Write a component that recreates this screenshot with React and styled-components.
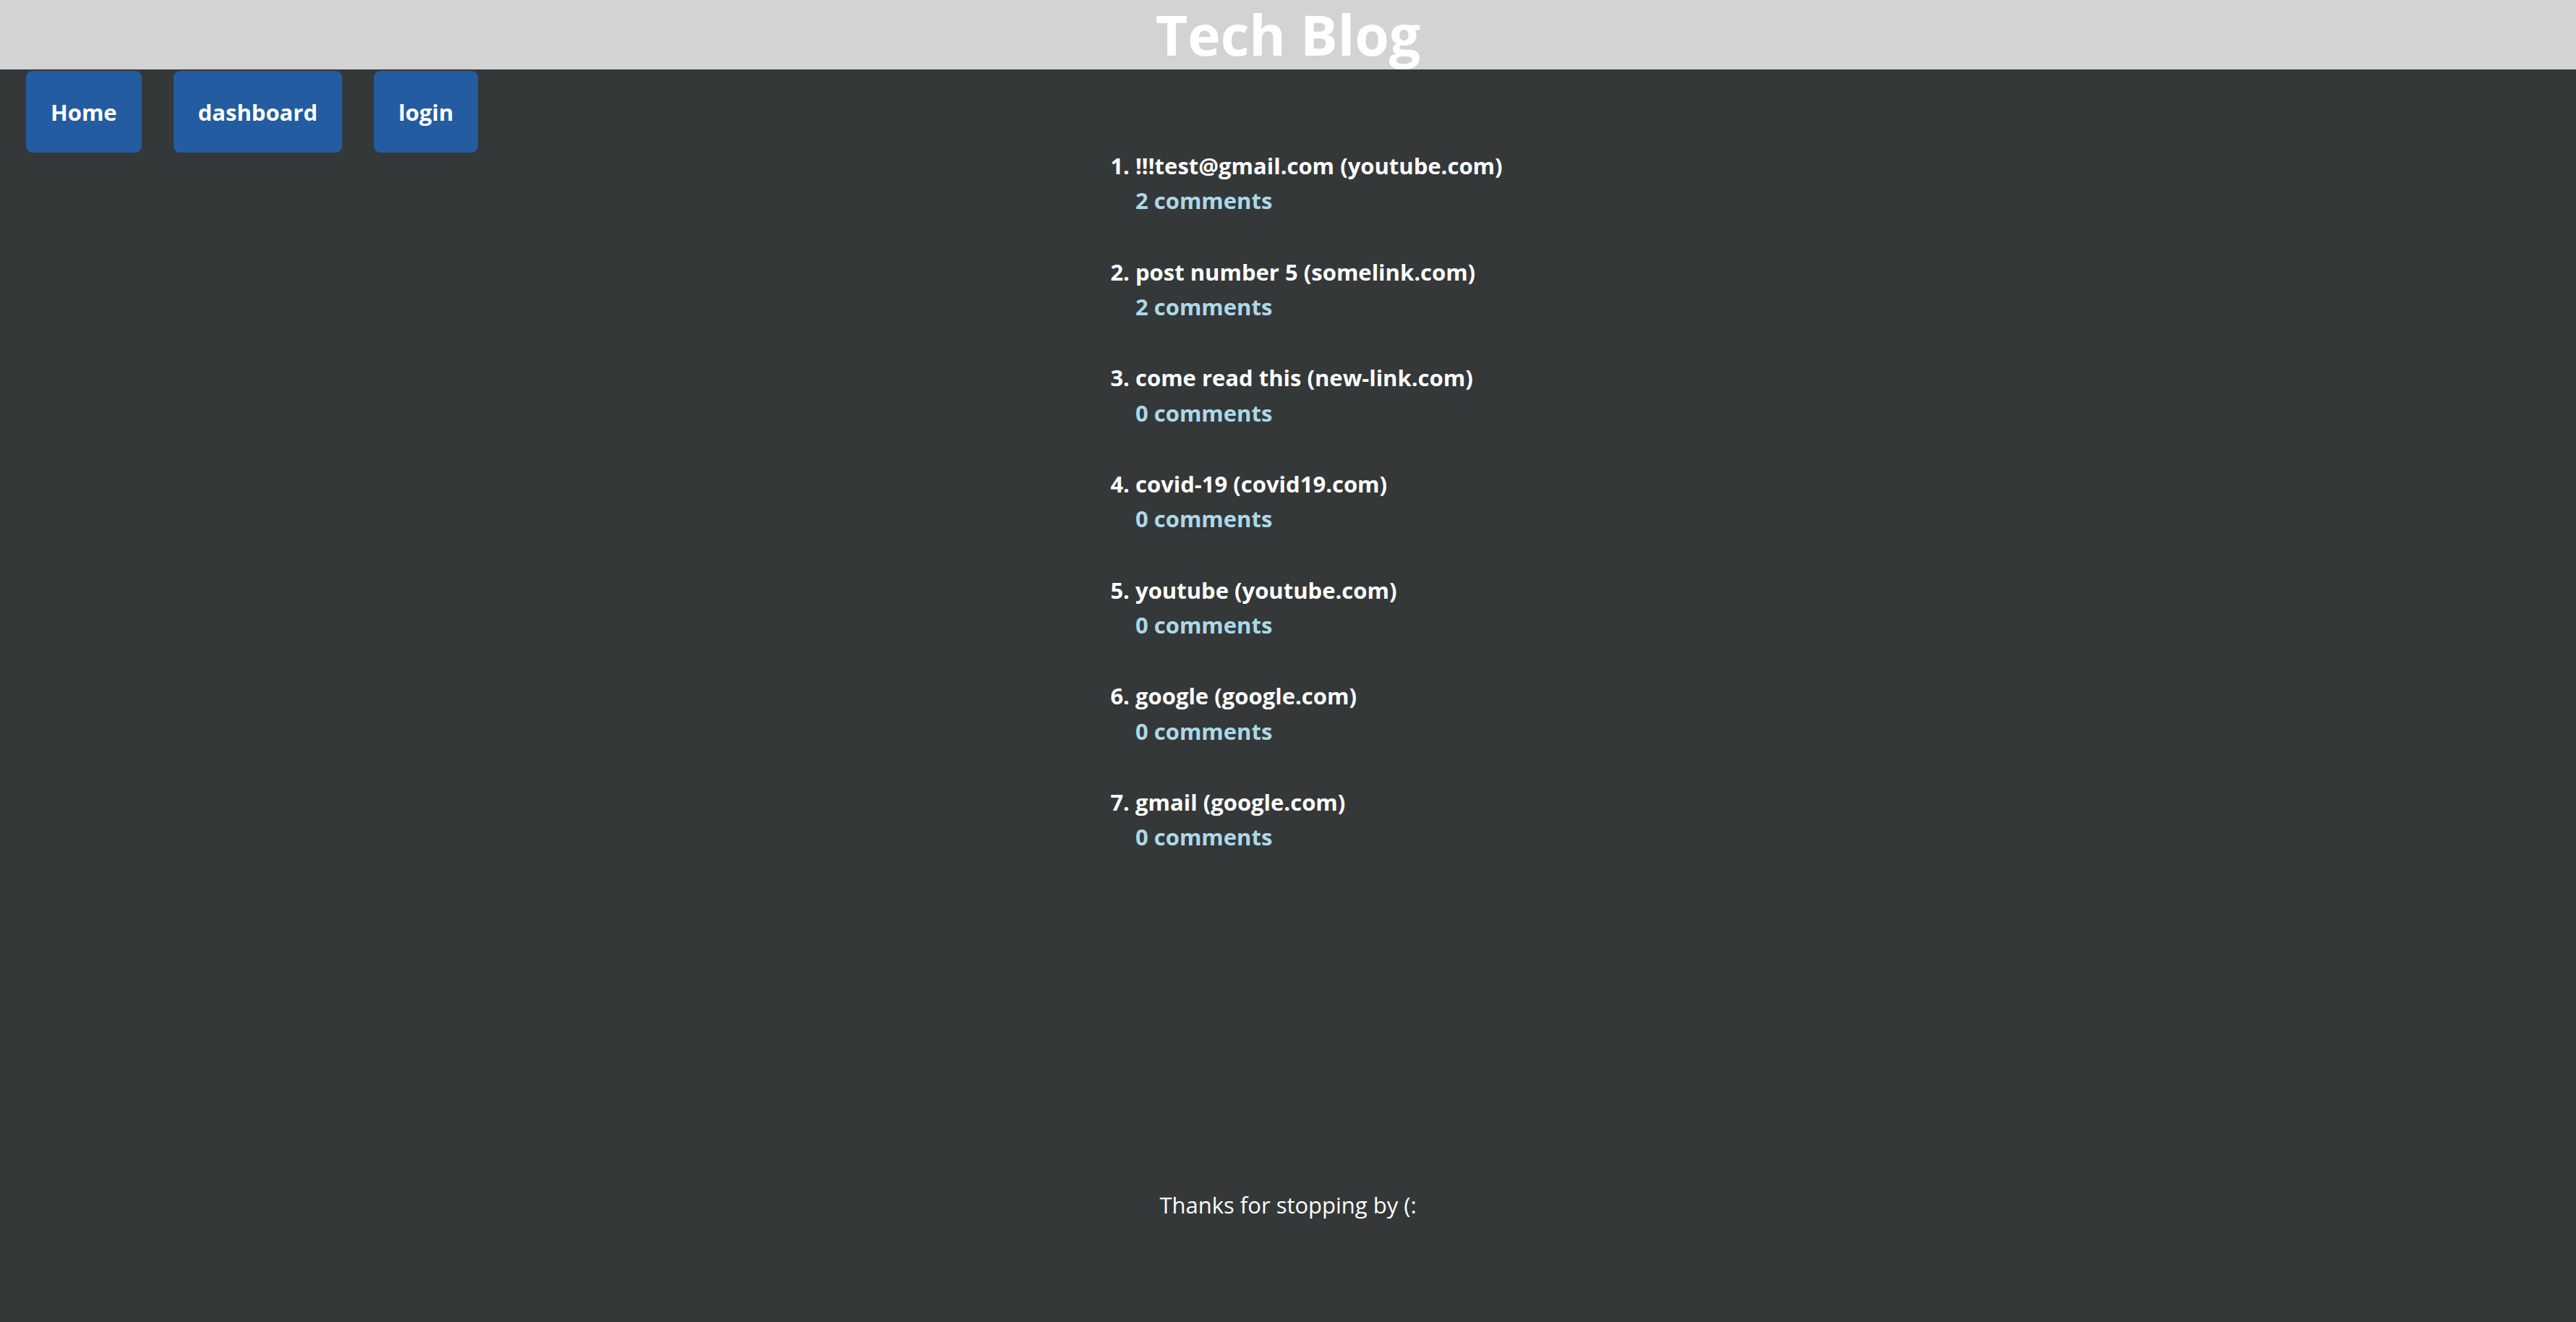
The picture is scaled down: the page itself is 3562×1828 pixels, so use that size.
import React from "react";
import styled, { createGlobalStyle } from "styled-components";

const posts = [
  { title: "!!!test@gmail.com", link: "youtube.com", comments: 2 },
  { title: "post number 5", link: "somelink.com", comments: 2 },
  { title: "come read this", link: "new-link.com", comments: 0 },
  { title: "covid-19", link: "covid19.com", comments: 0 },
  { title: "youtube", link: "youtube.com", comments: 0 },
  { title: "google", link: "google.com", comments: 0 },
  { title: "gmail", link: "google.com", comments: 0 },
];

const GlobalStyle = createGlobalStyle`
  body {
    margin: 0;
    background: #343839;
    color: #fff;
    font-family: "Open Sans", "Noto Sans", sans-serif;
  }
`;

const Page = styled.div`
  min-height: 100vh;
  display: flex;
  flex-direction: column;
`;

const Header = styled.header`
  height: 96px;
  background: #d3d3d3;
  text-align: center;
`;

const Title = styled.h1`
  margin: 0;
  font-size: 77px;
  line-height: 96px;
  font-weight: 700;
  color: #fff;
`;

const Main = styled.main`
  flex: 1;
  display: grid;
  grid-template-columns: 1fr 610px 1fr;
  align-items: start;
`;

const Nav = styled.nav`
  display: flex;
  gap: 44px;
  padding: 2px 0 0 36px;
`;

const NavButton = styled.a`
  display: flex;
  align-items: center;
  height: 113px;
  padding: 0 34px;
  border-radius: 9px;
  background: #235ca1;
  color: #fff;
  font-size: 31px;
  font-weight: 700;
  text-decoration: none;
`;

const PostList = styled.ol`
  margin: 0;
  padding: 109px 0 0 94px;
  font-size: 31px;
  font-weight: 700;
  line-height: 48.3px;
`;

const PostItem = styled.li`
  margin-bottom: 50.1px;
`;

const PostTitle = styled.div`
  color: #fff;
  white-space: nowrap;
`;

const CommentLink = styled.div`
  color: #add8e6;
`;

const Footer = styled.footer`
  padding-bottom: 138px;
  text-align: center;
  font-size: 31px;
  line-height: 48px;
`;

export default function App() {
  return (
    <Page>
      <GlobalStyle />
      <Header>
        <Title>Tech Blog</Title>
      </Header>
      <Main>
        <Nav>
          <NavButton>Home</NavButton>
          <NavButton>dashboard</NavButton>
          <NavButton>login</NavButton>
        </Nav>
        <PostList>
          {posts.map((p, i) => (
            <PostItem key={i}>
              <PostTitle>
                {p.title} ({p.link})
              </PostTitle>
              <CommentLink>{p.comments} comments</CommentLink>
            </PostItem>
          ))}
        </PostList>
      </Main>
      <Footer>Thanks for stopping by (:</Footer>
    </Page>
  );
}
